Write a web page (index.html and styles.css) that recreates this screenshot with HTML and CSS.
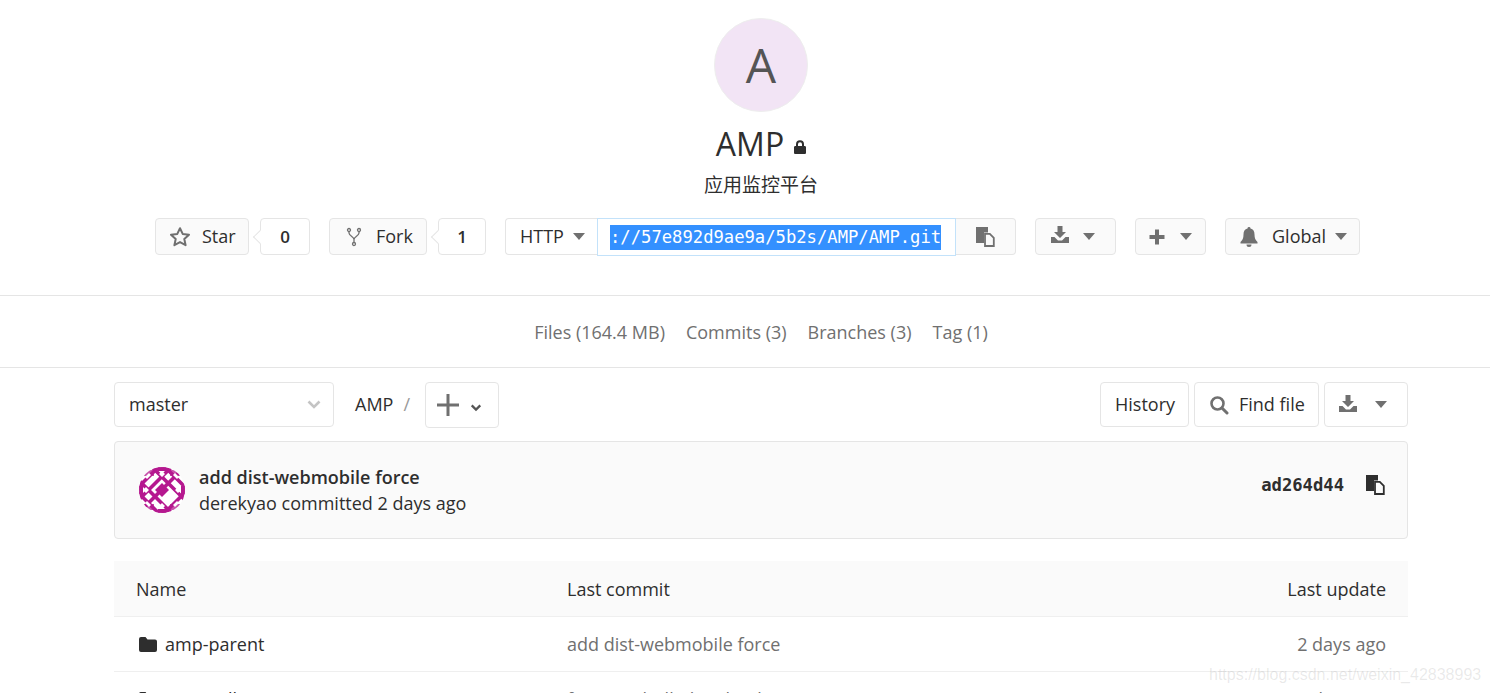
FILE: index.html
```html
<!DOCTYPE html>
<html lang="en">
<head>
<meta charset="utf-8">
<title>AMP</title>
<link rel="stylesheet" href="styles.css">
</head>
<body>
<header class="project">
  <div class="avatar">A</div>
  <h1 class="title">AMP <svg class="lock" viewBox="0 0 12 14"><path d="M2 6V4.200a4 4 0 0 1 8 0V6h.7c.7 0 1.300.6 1.300 1.300v5.400c0 .7-.6 1.300-1.300 1.300H1.300C.6 14 0 13.400 0 12.700V7.300C0 6.600.6 6 1.300 6H2zm2 0h4V4.200a2 2 0 0 0-4 0V6z"/></svg></h1>
  <p class="desc">应用监控平台</p>
  <div class="actions">
    <a class="btn w-star"><svg class="ic" viewBox="0 0 20 20"><path d="M10 1.200l2.700 5.700 6.300.8-4.700 4.300 1.300 6.200L10 15.100l-5.600 3.100 1.300-6.200L1 7.700l6.300-.8z" fill="none" stroke="#707070" stroke-width="2" stroke-linejoin="round"/></svg><span>Star</span></a>
    <span class="count w-c0">0</span>
    <a class="btn w-fork"><svg class="ic" viewBox="0 0 20 20"><g fill="none" stroke="#707070" stroke-width="1.300"><circle cx="5" cy="3" r="1.500"/><circle cx="15" cy="3" r="1.500"/><circle cx="10" cy="17" r="1.500"/><path d="M5 4.500v1.500c0 3 5 3.500 5 6.500v3M15 4.500v1.500c0 3-5 3.500-5 6.500"/></g></svg><span>Fork</span></a>
    <span class="count w-c1">1</span>
    <div class="clone">
      <a class="http">HTTP <i class="caret"></i></a>
      <div class="url"><span class="sel">://57e892d9ae9a/5b2s/AMP/AMP.git</span></div>
      <a class="copy"><svg class="ic" viewBox="0 0 20 20"><path fill="#707070" d="M1 0h12v5.500H9V16H1z"/><path d="M10 6.900h4.800l4 4V19H10z" fill="#fafafa" stroke="#707070" stroke-width="1.800"/></svg></a>
    </div>
    <a class="btn w-dl"><svg class="ic up" viewBox="0 0 20 20"><path fill="#707070" d="M7.500 1h5v6h3.500L10 13 4 7h3.500zM1 12h3.500L8 15.500h4l3.500-3.500H19v6H1z"/></svg><i class="caret"></i></a>
    <a class="btn w-plus"><svg class="ic" viewBox="0 0 20 20"><path fill="#707070" d="M8 2.500h4V8h5.500v4H12v5.500H8V12H2.500V8H8z"/></svg><i class="caret"></i></a>
    <a class="btn w-global"><svg class="ic" viewBox="0 0 20 20"><path fill="#707070" d="M10 0a1.500 1.500 0 0 1 1.500 1.600C14.300 2.300 15.500 4.500 15.500 7.500c0 4 1 5.500 3 7.500v1.500h-17V15c2-2 3-3.500 3-7.500 0-3 1.200-5.200 4-5.900A1.500 1.500 0 0 1 10 0zM7.500 17.500h5a2.500 2.500 0 0 1-5 0z"/></svg><span>Global</span><i class="caret"></i></a>
  </div>
</header>
<nav class="stats">
  <a>Files (164.4 MB)</a><a>Commits (3)</a><a>Branches (3)</a><a>Tag (1)</a>
</nav>
<main class="content">
  <div class="toolbar">
    <div class="branch"><span>master</span><svg class="chev light" viewBox="0 0 14 9"><path d="M1.500 1.500L7 7l5.500-5.500" fill="none" stroke-width="2.600"/></svg></div>
    <span class="crumb">AMP</span><span class="slash">/</span>
    <a class="add"><svg class="plus" viewBox="0 0 22 22"><path d="M11 0v22M0 11h22" stroke="#707070" stroke-width="3" fill="none"/></svg><svg class="chev dark" viewBox="0 0 14 9"><path d="M2 2l5 5 5-5" fill="none" stroke-width="2.600"/></svg></a>
    <div class="spacer"></div>
    <a class="tbtn w-hist">History</a>
    <a class="tbtn w-find"><svg class="ic" viewBox="0 0 20 20"><circle cx="8.500" cy="8.500" r="6" fill="none" stroke="#707070" stroke-width="2.600"/><path d="M13 13l5 5" stroke="#707070" stroke-width="3" stroke-linecap="round"/></svg><span>Find file</span></a>
    <a class="tbtn w-dl2"><svg class="ic up1" viewBox="0 0 20 20"><path fill="#707070" d="M7.500 1h5v6h3.500L10 13 4 7h3.500zM1 12h3.500L8 15.500h4l3.500-3.500H19v6H1z"/></svg><i class="caret"></i></a>
  </div>
  <section class="commit">
    <svg class="identicon" viewBox="0 0 46 46">
      <defs><clipPath id="c"><circle cx="23" cy="23" r="23"/></clipPath></defs>
      <g clip-path="url(#c)">
        <rect width="46" height="46" fill="#fff"/>
        <g stroke="#b5188f" stroke-width="3.600" fill="none">
          <path d="M-10 16.500L29.500-23M-10 29.500L42.500-23M-10 42.500L55.500-23M-10 55.500L68.500-23M3 68.500L68.500 3"/>
          <path d="M-10 29.500L42.500 82M-10 16.500L55.500 82M-10 3.500L68.500 82M3-10L68.500 55.500M16-10L68.500 42.500"/>
        </g>
        <g fill="#b5188f">
          <path d="M23 16l7 7-7 7-7-7z"/>
          <path d="M5 3h10v6H5zM31 3h10v6H31zM5 37h10v6H5zM31 37h10v6H31z" opacity=".75"/>
          <path d="M19 0h8v4h-8zM19 42h8v4h-8zM0 19h4v8H0zM42 19h4v8h-4z"/>
        </g>
        <g fill="#fff">
          <path d="M23 4l3 3-3 3-3-3zM23 36l3 3-3 3-3-3zM7 20l3 3-3 3-3-3zM39 20l3 3-3 3-3-3z"/>
          <path d="M6 10l4-4 2 2-4 4zM40 10l-4-4-2 2 4 4zM6 36l4 4 2-2-4-4zM40 36l-4 4-2-2 4-4z"/>
        </g>
      </g>
    </svg>
    <div class="commit-text">
      <strong>add dist-webmobile force</strong>
      <span>derekyao committed 2 days ago</span>
    </div>
    <code class="sha">ad264d44</code>
    <svg class="ic dark-ic" viewBox="0 0 20 20"><path fill="#2e2e2e" d="M1 0h12v5.500H9V16H1z"/><path d="M10 6.900h4.800l4 4V19H10z" fill="#fafafa" stroke="#2e2e2e" stroke-width="1.800"/></svg>
  </section>
  <div class="tree">
    <div class="row head"><span class="c1">Name</span><span class="c2">Last commit</span><span class="c3">Last update</span></div>
    <div class="row"><span class="c1 name"><svg class="folder" viewBox="0 0 18 15"><path fill="#2e2e2e" d="M0 2a2 2 0 0 1 2-2h4.500l2 2.500H16a2 2 0 0 1 2 2V13a2 2 0 0 1-2 2H2a2 2 0 0 1-2-2z"/></svg>amp-parent</span><span class="c2 muted">add dist-webmobile force</span><span class="c3 muted">2 days ago</span></div>
    <div class="row"><span class="c1 name"><svg class="folder" viewBox="0 0 18 15"><path fill="#2e2e2e" d="M0 2a2 2 0 0 1 2-2h4.500l2 2.500H16a2 2 0 0 1 2 2V13a2 2 0 0 1-2 2H2a2 2 0 0 1-2-2z"/></svg>amp-collector</span><span class="c2 muted">fix some bulk data load</span><span class="c3 muted">2 days ago</span></div>
  </div>
</main>
<div class="watermark">https://blog.csdn.net/weixin_42838993</div>
</body>
</html>
```
FILE: styles.css
```css
html, body { margin: 0; height: 693px; overflow: hidden; }
body { position: relative; background: #fff; color: #2e2e2e; font: 18px/1.3 "Open Sans", "Noto Sans CJK SC", sans-serif; }
a { color: inherit; }
.project { display: flex; flex-direction: column; align-items: center; padding: 18px 0 0 32px; height: 277px; border-bottom: 1px solid #e5e5e5; }
.avatar { box-sizing: border-box; width: 94px; height: 94px; border-radius: 50%; background: #f2e4f5; border: 1px solid #eee; display: flex; align-items: center; justify-content: center; font-size: 48px; color: #555; line-height: 1; }
.title { margin: 12px 0 0 0; font-size: 32px; font-weight: 400; line-height: 40px; display: flex; align-items: center; gap: 10px; }
.lock { width: 12px; height: 14px; fill: #2e2e2e; margin-top: 6px; }
.desc { margin: 9px 0 0 0; line-height: 24px; font-size: 19px; }
.actions { display: flex; align-self: flex-start; margin: 21px 0 0 123px; height: 37px; }
.btn, .count, .http, .copy, .url { box-sizing: border-box; height: 37px; display: flex; align-items: center; border: 1px solid #e5e5e5; }
.btn { background: #fafafa; border-radius: 4px; }
.btn span { margin-left: 12px; }
.ic { width: 20px; height: 20px; flex: none; }
.ic.up { margin-top: -4px; }
.ic.up1 { margin-top: -2px; }
.caret { display: block; width: 0; height: 0; border: 6px solid transparent; border-top: 7px solid #707070; border-bottom: 0; }
.count { position: relative; background: #fff; border-radius: 4px; justify-content: center; font-weight: 600; font-size: 17px; margin-left: 11px; padding-top: 2px; }
.count::before { content: ""; position: absolute; left: -6px; top: 13px; width: 9px; height: 9px; background: #fff; border-left: 1px solid #e5e5e5; border-bottom: 1px solid #e5e5e5; transform: rotate(45deg); }
.w-star { width: 94px; padding-left: 14px; }
.w-c0 { width: 50px; margin-right: 19px; }
.w-fork { width: 98px; padding-left: 14px; }
.w-c1 { width: 48px; margin-right: 19px; }
.clone { display: flex; margin-right: 19px; }
.http { width: 92px; padding-left: 14px; gap: 9px; border-radius: 4px 0 0 4px; border-right: 0; }
.url { width: 359px; height: 38px; border-color: #c3e2fa; padding-left: 12px; background: #fff; }
.sel { background: #3390ff; color: #fff; font: 17.200px/25px "DejaVu Sans Mono", monospace; white-space: nowrap; }
.copy { width: 60px; background: #fafafa; border-left: 0; border-radius: 0 4px 4px 0; padding-left: 19px; }
.w-dl { width: 81px; padding-left: 14px; gap: 13px; margin-right: 19px; }
.w-plus { width: 71px; padding-left: 11px; gap: 13px; margin-right: 19px; }
.w-global { width: 135px; padding-left: 13px; }
.w-global span { margin-left: 13px; }
.w-global .caret { margin-left: 9px; }
.stats { box-sizing: border-box; display: flex; justify-content: center; gap: 21px; height: 72px; padding: 2px 0 0 32px; align-items: center; border-bottom: 1px solid #e5e5e5; color: #707070; }
.content { padding: 14px 82px 0 114px; }
.toolbar { display: flex; align-items: center; height: 46px; }
.branch { box-sizing: border-box; width: 220px; height: 45px; align-self: flex-start; border: 1px solid #e5e5e5; border-radius: 4px; display: flex; align-items: center; justify-content: space-between; padding: 0 12px 0 14px; }
.chev { width: 14px; height: 9px; }
.chev.light { stroke: #c4c4c4; }
.chev.dark { stroke: #555; width: 12px; margin-top: 4px; }
.crumb { margin-left: 21px; }
.slash { margin: 0 15px 0 10px; color: #999; }
.add { box-sizing: border-box; width: 74px; height: 46px; border: 1px solid #e5e5e5; border-radius: 4px; display: flex; align-items: center; padding-left: 11px; gap: 11px; }
.plus { width: 22px; height: 22px; }
.spacer { flex: 1; }
.tbtn { box-sizing: border-box; height: 45px; align-self: flex-start; border: 1px solid #e5e5e5; border-radius: 4px; display: flex; align-items: center; margin-left: 5px; }
.w-hist { width: 89px; padding-left: 14px; }
.w-find { width: 125px; padding-left: 14px; gap: 10px; }
.w-dl2 { width: 84px; padding-left: 13px; gap: 17px; }
.commit { box-sizing: border-box; height: 98px; margin-top: 13px; border: 1px solid #e5e5e5; border-radius: 4px; background: #fafafa; display: flex; align-items: center; padding: 0 22px 0 24px; }
.identicon { width: 46px; height: 46px; flex: none; }
.commit-text { display: flex; flex-direction: column; margin-left: 14px; flex: 1; line-height: 26px; }
.commit-text strong { font-weight: 600; }
.sha { font: 700 17.200px/1 "DejaVu Sans Mono", monospace; margin: 0 21px 8px 0; }
.dark-ic { margin-bottom: 10px; }
.tree { margin-top: 22px; }
.row { box-sizing: border-box; display: flex; align-items: center; height: 55px; padding: 2px 22px 0; border-bottom: 1px solid #efefef; }
.head { background: #fafafa; height: 56px; }
.c1 { width: 431px; }
.c2 { flex: 1; }
.muted { color: #707070; }
.name { display: flex; align-items: center; gap: 8px; padding-left: 3px; box-sizing: border-box; }
.folder { width: 18px; height: 15px; }
.watermark { position: absolute; left: 1209px; top: 664px; font: 16px/22px "Liberation Sans", sans-serif; color: rgba(120,120,120,.16); white-space: nowrap; }
```
